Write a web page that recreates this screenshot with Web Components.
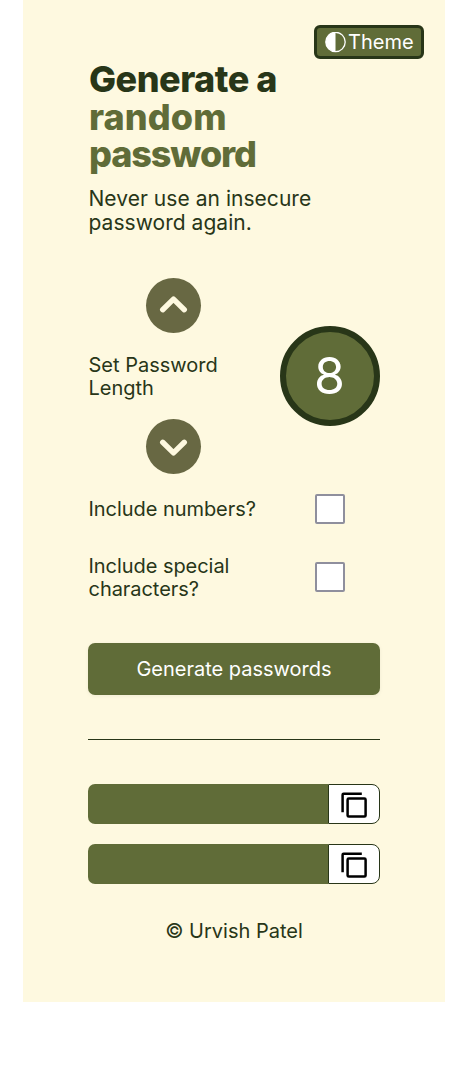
<!DOCTYPE html>
<html lang="en">
<head>
<meta charset="utf-8">
<title>Password generator</title>
<style>
body { margin: 0; background: #fff; font-family: Inter, "Liberation Sans", sans-serif; }
</style>
</head>
<body>
<password-app></password-app>
<script>
const define = (name, html) => {
  const template = document.createElement('template');
  template.innerHTML = html;
  customElements.define(name, class extends HTMLElement {
    constructor() {
      super();
      this.attachShadow({ mode: 'open' }).append(template.content.cloneNode(true));
    }
  });
};

define('theme-button', `
<style>
:host { display: block; width: 110px; height: 34px; }
button { box-sizing: border-box; width: 100%; height: 100%; padding: 0 0 0 8px; margin: 0; display: flex; align-items: center; gap: 2px;
  border: 3px solid var(--dark); border-radius: 6px; background: var(--olive); color: #fff; font: 400 20px/24px Inter, sans-serif; }
svg { flex: none; display: block; }
</style>
<button><svg width="21" height="21" viewBox="0 0 21 21"><circle cx="10.5" cy="10" r="9.7" fill="none" stroke="#fff" stroke-width="1.3"/><path d="M10.5 .3a9.7 9.7 0 0 0 0 19.4z" fill="#fff"/></svg><slot></slot></button>`);

define('page-intro', `
<style>
:host { display: block; }
h1 { margin: 0 0 0 1px; font: 800 36px/37.5px Inter, sans-serif; letter-spacing: -.5px; color: var(--dark); }
h1 span { display: block; color: var(--olive); }
p { margin: 13.5px 0 0 .5px; font-size: 21px; line-height: 24px; letter-spacing: .04px; }
</style>
<h1><slot name="lead"></slot><span><slot name="accent"></slot></span></h1>
<p><slot></slot></p>`);

define('step-button', `
<style>
:host { display: block; width: 55px; height: 55px; }
:host([down]) svg { transform: rotate(180deg); }
button { display: block; width: 55px; height: 55px; padding: 0; border: 0; border-radius: 50%; background: var(--moss); }
svg { display: block; }
</style>
<button><svg width="55" height="55" viewBox="0 0 55 55"><path d="M16.7 31.7 27.5 21.1 38.3 31.7" fill="none" stroke="var(--cream)" stroke-width="5.4" stroke-linecap="round" stroke-linejoin="round"/></svg></button>`);

define('length-picker', `
<style>
:host { display: flex; align-items: center; justify-content: space-between; }
.steps { width: 171px; display: flex; flex-direction: column; align-items: center; }
.label { box-sizing: border-box; width: 171px; height: 46px; margin: 21px 0 19px; padding-left: .5px; line-height: 23px; }
.value { box-sizing: border-box; width: 100px; height: 100px; display: flex; align-items: center; justify-content: center;
  border: 6px solid var(--dark); border-radius: 50%; background: var(--olive); color: #fff; font-size: 50px; line-height: 60px; padding-right: 1px; }
</style>
<div class="steps"><step-button></step-button><div class="label"><slot></slot></div><step-button down></step-button></div>
<div class="value"><slot name="value"></slot></div>`);

define('option-row', `
<style>
:host { display: flex; align-items: center; justify-content: space-between; padding-right: 35px; height: 30px; line-height: 23px; }
label { width: 180px; padding-left: .5px; letter-spacing: -.05px; }
input { appearance: none; box-sizing: border-box; width: 30px; height: 30px; margin: 0; border: 2px solid #8f8f9d; border-radius: 2px; background: #fff; }
</style>
<label><slot></slot></label><input type="checkbox">`);

define('generate-button', `
<style>
:host { display: block; }
button { display: block; width: 100%; height: 52px; padding: 0; border: 0; border-radius: 7px; background: var(--olive); color: #fff;
  font: 400 20px/24px Inter, sans-serif; box-shadow: 0 1px 4px rgba(0,0,0,.06); }
</style>
<button><slot></slot></button>`);

define('password-field', `
<style>
:host { display: grid; grid-template-columns: 240px 52px; height: 40px; }
.out { background: var(--olive); border-radius: 7px 0 0 7px; }
button { box-sizing: border-box; padding: 0; border: 1px solid var(--dark); border-radius: 0 8px 8px 0; background: #fff; }
svg { display: block; }
</style>
<div class="out"></div>
<button><svg width="50" height="38" viewBox="0 0 50 38" fill="none" stroke="#000" stroke-width="2.5"><rect x="18.6" y="13.6" width="18" height="18" rx="1.2"/><path d="M13.6 27.3V9.8Q13.6 8.8 14.6 8.8H32.8"/></svg></button>`);

define('password-app', `
<style>
:host { --dark: #283618; --olive: #606c38; --moss: #686843; --cream: #fef9e0;
  display: block; box-sizing: border-box; width: 422px; height: 1002px; margin-left: 23px; padding: 25px 65px 0;
  background: var(--cream); color: var(--dark); font-size: 20px; }
theme-button { margin: 0 -44px 0 auto; }
page-intro { margin-top: 2px; }
length-picker { margin-top: 43px; }
option-row.numbers { margin-top: 20px; }
option-row.special { margin-top: 38px; }
option-row.special span { position: relative; top: 1px; }
.random { letter-spacing: .1px; }
.password { letter-spacing: -1.1px; }
generate-button { margin-top: 51px; }
hr { height: 1px; border: 0; background: var(--dark); margin: 44px 0; }
.results { display: grid; gap: 20px; }
footer { margin-top: 35px; text-align: center; line-height: 24px; }
</style>
<theme-button>Theme</theme-button>
<page-intro><span slot="lead">Generate a</span><span slot="accent"><span class="random">random</span><br><span class="password">password</span></span>Never use an insecure password again.</page-intro>
<length-picker>Set Password Length<span slot="value">8</span></length-picker>
<option-row class="numbers">Include numbers?</option-row>
<option-row class="special"><span>Include special characters?</span></option-row>
<generate-button>Generate passwords</generate-button>
<hr>
<div class="results"><password-field></password-field><password-field></password-field></div>
<footer>© Urvish Patel</footer>`);
</script>
</body>
</html>
